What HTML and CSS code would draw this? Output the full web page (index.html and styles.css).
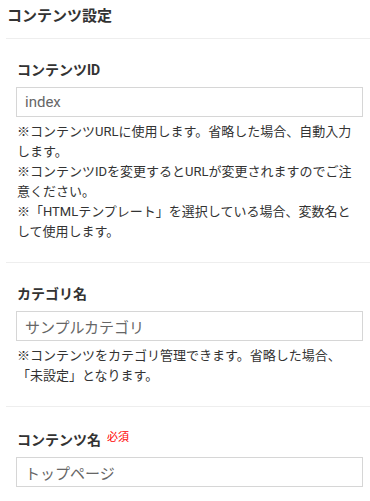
FILE: index.html
```html
<!DOCTYPE html>
<html lang="ja">
<head>
    <meta charset="UTF-8">
    <meta name="viewport" content="width=device-width, initial-scale=1.0">
    <title>コンテンツ設定</title>
    <link rel="stylesheet" href="styles.css">
</head>
<body>

<div class="panel">
    <h2 class="panel-title">コンテンツ設定</h2>

    <section class="field">
        <label class="field-label" for="content-id">コンテンツID</label>
        <input type="text" id="content-id" class="field-input" value="index">
        <p class="field-note">※コンテンツURLに使用します。省略した場合、自動入力します。<br>※コンテンツIDを変更するとURLが変更されますのでご注意ください。<br>※「HTMLテンプレート」を選択している場合、変数名として使用します。</p>
    </section>

    <section class="field">
        <label class="field-label" for="category">カテゴリ名</label>
        <input type="text" id="category" class="field-input" value="サンプルカテゴリ">
        <p class="field-note">※コンテンツをカテゴリ管理できます。省略した場合、<br>「未設定」となります。</p>
    </section>

    <section class="field">
        <label class="field-label" for="content-name">コンテンツ名<span class="required">必須</span></label>
        <input type="text" id="content-name" class="field-input" value="トップページ">
    </section>
</div>

</body>
</html>
```

FILE: styles.css
```css
/* Basic reset */
* {
    margin: 0;
    padding: 0;
    box-sizing: border-box;
}

body {
    font-family: Roboto, "Noto Sans CJK JP", sans-serif;
    color: #333;
    background: #fff;
}

.panel {
    padding-left: 6px;
}

.panel-title {
    font-size: 15px;
    font-weight: bold;
    line-height: 22px;
    padding: 5px 1px 11px;
    border-bottom: 1px solid #eee;
}

.field {
    padding: 21px 7px 20px 10px;
    border-bottom: 1px solid #eee;
}

.field:last-child {
    border-bottom: none;
}

.field-label {
    display: block;
    font-size: 14px;
    font-weight: bold;
    line-height: 20px;
    margin-bottom: 7px;
    padding-left: 1px;
}

.required {
    color: #f00;
    font-size: 11px;
    font-weight: normal;
    margin-left: 6px;
    vertical-align: 4px;
}

.field-input {
    display: block;
    width: 100%;
    height: 30px;
    border: 1px solid #d6d6d6;
    padding: 0 8px;
    font-family: Roboto, "Noto Sans CJK JP", sans-serif;
    font-size: 15px;
    color: #666;
    background: #fff;
    outline: none;
}

.field-note {
    margin-top: 5px;
    font-size: 13px;
    line-height: 20px;
    padding-left: 1px;
}
```
